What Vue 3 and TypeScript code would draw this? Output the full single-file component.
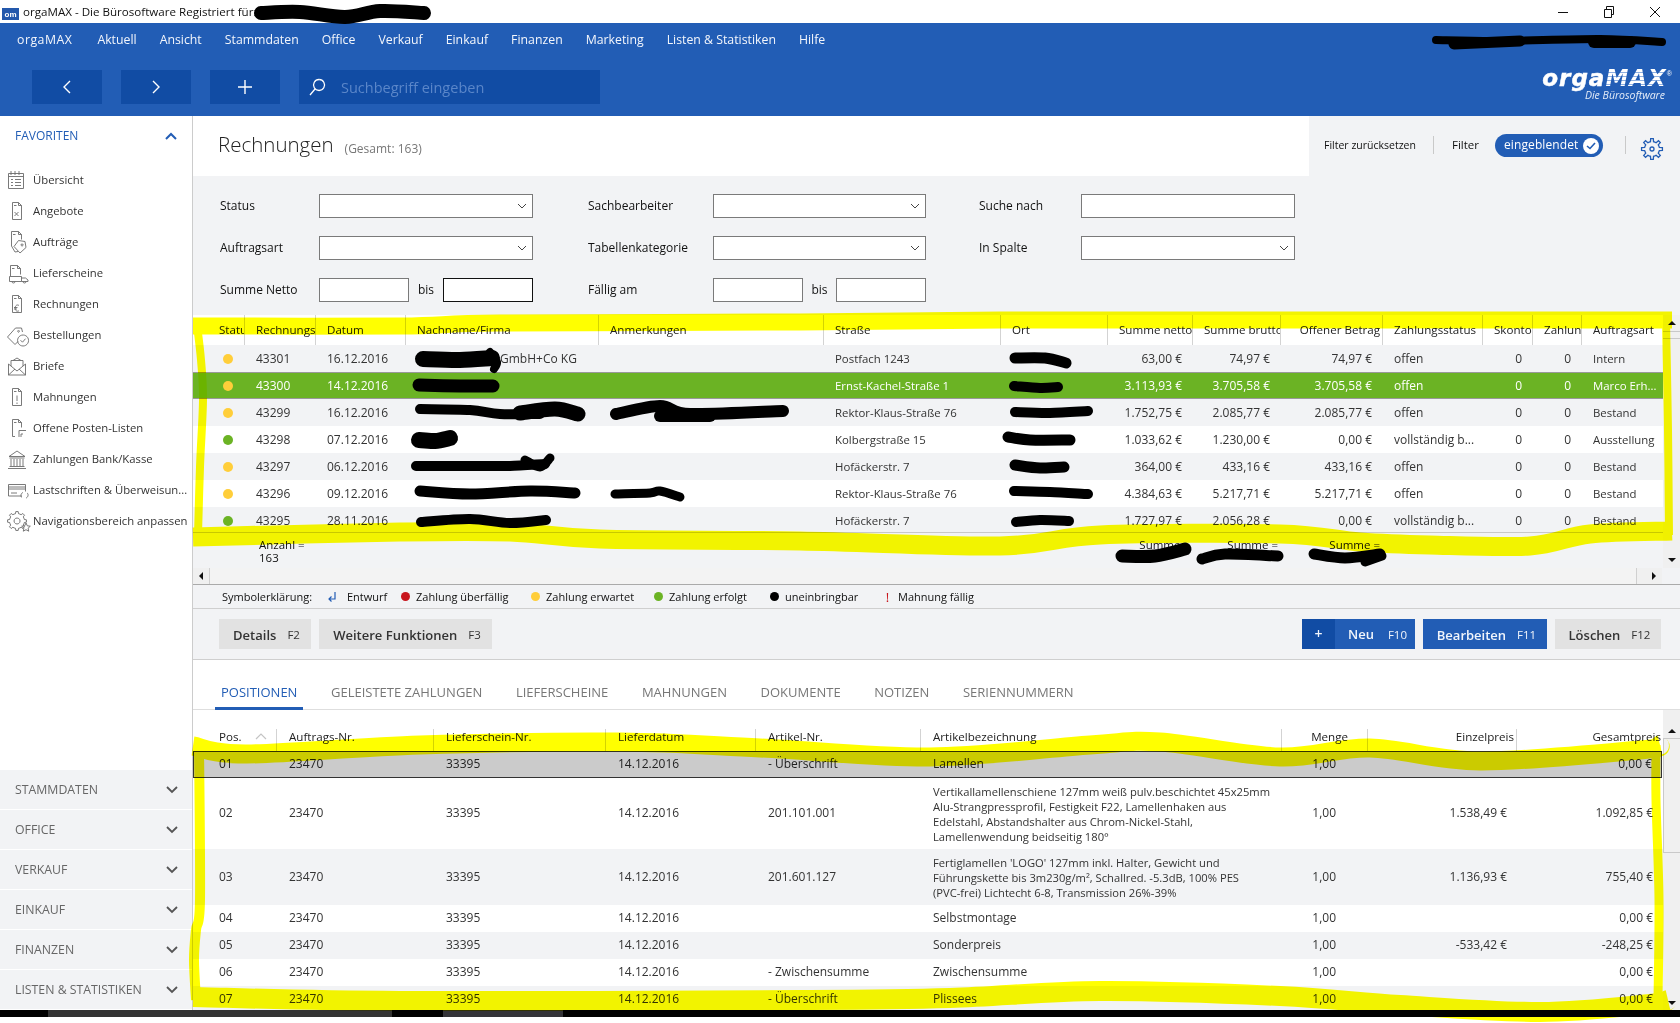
<script setup lang="ts">
type Pt = [number, number]

function smooth(p: Pt[]): string {
  let d = `M${p[0][0]} ${p[0][1]}`
  for (let i = 0; i < p.length - 1; i++) {
    const a = p[Math.max(i - 1, 0)], b = p[i], c = p[i + 1], e = p[Math.min(i + 2, p.length - 1)]
    const c1: Pt = [b[0] + (c[0] - a[0]) / 6, b[1] + (c[1] - a[1]) / 6]
    const c2: Pt = [c[0] - (e[0] - b[0]) / 6, c[1] - (e[1] - b[1]) / 6]
    d += `C${c1[0].toFixed(1)} ${c1[1].toFixed(1)} ${c2[0].toFixed(1)} ${c2[1].toFixed(1)} ${c[0]} ${c[1]}`
  }
  return d
}

function gear(cx: number, cy: number, r1: number, r2: number, n: number): string {
  let d = ''
  const st = (Math.PI * 2) / n
  for (let i = 0; i < n; i++) {
    const a = i * st
    const pts: Pt[] = [
      [r1, a - st * 0.5], [r1, a - st * 0.26], [r2, a - st * 0.16], [r2, a + st * 0.16], [r1, a + st * 0.26]
    ]
    for (const [r, t] of pts) {
      d += `${d ? 'L' : 'M'}${(cx + r * Math.cos(t)).toFixed(2)} ${(cy + r * Math.sin(t)).toFixed(2)}`
    }
  }
  return d + 'Z'
}

const doc = 'M6.5 3.5h6l3 3v14h-9z M12.5 3.5v3h3 M8 6.5h2.5 '
const menu = ['orgaMAX', 'Aktuell', 'Ansicht', 'Stammdaten', 'Office', 'Verkauf', 'Einkauf', 'Finanzen', 'Marketing', 'Listen & Statistiken', 'Hilfe']

const nav = [
  { t: 'Übersicht', d: 'M2.5 5.5h15v15h-15z M5 3v4 M9 3v4 M13 3v4 M2.5 8.5h15 M9 11.5h6 M9 14.5h6 M9 17.5h6 M5 11.5h2 M5 14.5h2 M5 17.5h2' },
  { t: 'Angebote', d: doc + 'M8.5 13l4 4 M12.5 13l-4 4' },
  { t: 'Aufträge', d: 'M5.5 16V1.5h7l3 3v5 M12.5 1.5v3h3 M7 4.5h2.5 M12.5 10.5l6.5 1 1 6-6 5.5-6-6.5z M5.5 16l3.5 6 3-.5 M16 14a1 1 0 1 0 .1 0' },
  { t: 'Lieferscheine', d: 'M4.5 15V4.5h7l3 3v6 M11.5 4.5v3h3 M6 7.5h2.5 M3.5 15.5h12v5h-12z M15.5 17h4l2.5 2v1.5h-6.5 M6 20.5a1.5 1.5 0 1 0 3 0 M17 20.5a1.5 1.5 0 1 0 3 0' },
  { t: 'Rechnungen', d: doc + 'M13 13.5c-2-1.3-3.8 0-3.8 2.6s1.8 3.9 3.8 2.6 M8 15.5h3.5 M8 17h3' },
  { t: 'Bestellungen', d: 'M1.5 14l8-9h6l1 4 M1.5 14l7.5 7.5 3-3 M12.5 7.5a.8 .8 0 1 0 .1 0 M14.5 17.2l2 2 3-3.5 M17 12a5.5 5.5 0 1 0 .1 0' },
  { t: 'Briefe', d: 'M2.5 10v11h17V10 M2.5 21l6.5-6 M19.5 21l-6.5-6 M2.5 10l8.5 7 8.5-7 M5 12V6.5h12V12 M7 6.5l4-2.5 4 2.5' },
  { t: 'Mahnungen', d: doc + 'M11 10.5v5.5 M11 17.5v1.5' },
  { t: 'Offene Posten-Listen', d: 'M9 20.5H6.5v-17h6l3 3v5 M12.5 3.5v3h3 M8 6.5h2.5 M13 21v-6.5h7 M17 18h-2v3' },
  { t: 'Zahlungen Bank/Kasse', d: 'M3 9.5L11 4l8 5.5z M5 12v7 M8 12v7 M11 12v7 M14 12v7 M17 12v7 M3.5 11h15 M3.5 19.5h15 M2 21.5h18' },
  { t: 'Lastschriften & Überweisun...', d: 'M16 18H2.5V6.5h17v7 M2.5 9h17 M2.5 11h17 M5 15h6 M16 19.5c-2 -1-1-4.5 1-5 M21 15c2 1 1 4.5-1 5' },
  { t: 'Navigationsbereich anpassen', d: gear(11, 12, 7.5, 9.5, 8) + ' M11 9a3 3 0 1 0 .1 0 M20 14l1.3 2.8 3 .4-2.2 2 .6 3-2.7-1.5-2.7 1.5.6-3-2.2-2 3-.4z' }
]
const sections = ['STAMMDATEN', 'OFFICE', 'VERKAUF', 'EINKAUF', 'FINANZEN', 'LISTEN & STATISTIKEN']

const g1Head = [
  { t: 'Status' }, { t: 'Rechnungsnr.' }, { t: 'Datum' }, { t: 'Nachname/Firma' }, { t: 'Anmerkungen' }, { t: 'Straße' }, { t: 'Ort' },
  { t: 'Summe netto', r: true }, { t: 'Summe brutto', r: true }, { t: 'Offener Betrag', r: true }, { t: 'Zahlungsstatus' },
  { t: 'Skonto', r: true }, { t: 'Zahlung', r: true }, { t: 'Auftragsart' }
]
const Y = 'y', G = 'g'
const g1Rows = [
  { dot: Y, nr: '43301', date: '16.12.2016', name: 'GmbH+Co KG', shift: true, street: 'Postfach 1243', net: '63,00 €', gross: '74,97 €', open: '74,97 €', st: 'offen', art: 'Intern', sel: false },
  { dot: Y, nr: '43300', date: '14.12.2016', name: '', shift: false, street: 'Ernst-Kachel-Straße 1', net: '3.113,93 €', gross: '3.705,58 €', open: '3.705,58 €', st: 'offen', art: 'Marco Erh...', sel: true },
  { dot: Y, nr: '43299', date: '16.12.2016', name: '', shift: false, street: 'Rektor-Klaus-Straße 76', net: '1.752,75 €', gross: '2.085,77 €', open: '2.085,77 €', st: 'offen', art: 'Bestand', sel: false },
  { dot: G, nr: '43298', date: '07.12.2016', name: '', shift: false, street: 'Kolbergstraße 15', net: '1.033,62 €', gross: '1.230,00 €', open: '0,00 €', st: 'vollständig b...', art: 'Ausstellung', sel: false },
  { dot: Y, nr: '43297', date: '06.12.2016', name: '', shift: false, street: 'Hofäckerstr. 7', net: '364,00 €', gross: '433,16 €', open: '433,16 €', st: 'offen', art: 'Bestand', sel: false },
  { dot: Y, nr: '43296', date: '09.12.2016', name: '', shift: false, street: 'Rektor-Klaus-Straße 76', net: '4.384,63 €', gross: '5.217,71 €', open: '5.217,71 €', st: 'offen', art: 'Bestand', sel: false },
  { dot: G, nr: '43295', date: '28.11.2016', name: '', shift: false, street: 'Hofäckerstr. 7', net: '1.727,97 €', gross: '2.056,28 €', open: '0,00 €', st: 'vollständig b...', art: 'Bestand', sel: false }
]

const tabs = ['POSITIONEN', 'GELEISTETE ZAHLUNGEN', 'LIEFERSCHEINE', 'MAHNUNGEN', 'DOKUMENTE', 'NOTIZEN', 'SERIENNUMMERN']
const g2Rows = [
  { pos: '01', art: '- Überschrift', desc: ['Lamellen'], ep: '', gp: '0,00 €', cls: 'picked' },
  { pos: '02', art: '201.101.001', desc: ['Vertikallamellenschiene 127mm weiß pulv.beschichtet 45x25mm', 'Alu-Strangpressprofil, Festigkeit F22, Lamellenhaken aus', 'Edelstahl, Abstandshalter aus Chrom-Nickel-Stahl,', 'Lamellenwendung beidseitig 180°'], ep: '1.538,49 €', gp: '1.092,85 €', cls: '' },
  { pos: '03', art: '201.601.127', desc: ["Fertiglamellen 'LOGO' 127mm inkl. Halter, Gewicht und", 'Führungskette bis 3m230g/m², Schallred. -5.3dB,  100% PES', '(PVC-frei) Lichtecht 6-8, Transmission 26%-39%'], ep: '1.136,93 €', gp: '755,40 €', cls: 'alt' },
  { pos: '04', art: '', desc: ['Selbstmontage'], ep: '', gp: '0,00 €', cls: '' },
  { pos: '05', art: '', desc: ['Sonderpreis'], ep: '-533,42 €', gp: '-248,25 €', cls: 'alt' },
  { pos: '06', art: '- Zwischensumme', desc: ['Zwischensumme'], ep: '', gp: '0,00 €', cls: '' },
  { pos: '07', art: '- Überschrift', desc: ['Plissees'], ep: '', gp: '0,00 €', cls: 'alt' }
]

const yellow: { d: string; w: number }[] = [
  { w: 17, d: smooth([[193, 326], [400, 326], [500, 323], [800, 322], [1000, 320], [1300, 320], [1672, 320]]) },
  { w: 8, d: smooth([[197, 325], [201, 360], [203, 400], [200, 467], [198, 535]]) },
  { w: 8, d: smooth([[1666, 320], [1668, 430], [1669, 535]]) },
  { w: 19, d: smooth([[193, 537], [400, 532], [510, 532], [600, 539], [800, 541], [1000, 546], [1100, 535], [1280, 534], [1360, 542], [1430, 545], [1530, 546], [1590, 534], [1672, 531]]) },
  { w: 19, d: smooth([[193, 746], [247, 754], [420, 745], [620, 742], [760, 748], [930, 757], [1090, 745], [1160, 742], [1280, 757], [1370, 748], [1480, 761], [1640, 750], [1660, 745]]) },
  { w: 10, d: smooth([[199, 745], [200, 900], [196, 930], [194, 960], [196, 1000]]) },
  { w: 9, d: smooth([[1656, 745], [1656, 800], [1659, 900], [1658, 1000]]) },
  { w: 20, d: smooth([[193, 997], [400, 1001], [800, 1000], [950, 998], [1100, 991], [1280, 996], [1400, 1005], [1540, 1012], [1650, 1004], [1668, 1000]]) }
]
const black: { d: string; w: number }[] = [
  { w: 11, d: smooth([[261, 13], [300, 12], [345, 17], [380, 11], [424, 13]]) },
  { w: 5, d: smooth([[1436, 40], [1500, 41], [1600, 39], [1662, 42]]) },
  { w: 8, d: smooth([[1454, 44], [1520, 41]]) },
  { w: 9, d: smooth([[1594, 42], [1630, 42]]) },
  { w: 13, d: smooth([[423, 359], [460, 360], [492, 358]]) },
  { w: 5, d: smooth([[490, 352], [497, 362], [494, 369]]) },
  { w: 10, d: smooth([[419, 385], [460, 386], [493, 386]]) },
  { w: 7, d: smooth([[420, 409], [470, 410], [500, 414], [540, 414]]) },
  { w: 12, d: smooth([[520, 413], [555, 409], [578, 414]]) },
  { w: 9, d: smooth([[616, 414], [660, 406], [690, 414], [783, 411]]) },
  { w: 9, d: smooth([[660, 416], [710, 416]]) },
  { w: 13, d: smooth([[419, 440], [435, 441], [450, 438]]) },
  { w: 7, d: smooth([[416, 466], [485, 466], [510, 466], [545, 464]]) },
  { w: 6, d: smooth([[525, 460], [540, 467], [550, 458]]) },
  { w: 8, d: smooth([[420, 491], [470, 494], [530, 491], [575, 493]]) },
  { w: 6, d: smooth([[615, 494], [650, 493], [660, 491], [680, 497]]) },
  { w: 7, d: smooth([[421, 522], [470, 519], [510, 523], [546, 520]]) },
  { w: 8, d: smooth([[1015, 358], [1045, 358], [1066, 363]]) },
  { w: 7, d: smooth([[1014, 386], [1040, 388], [1058, 387]]) },
  { w: 7, d: smooth([[1015, 412], [1050, 413], [1088, 411]]) },
  { w: 8, d: smooth([[1008, 437], [1030, 440], [1070, 440]]) },
  { w: 8, d: smooth([[1015, 465], [1040, 468], [1064, 467]]) },
  { w: 7, d: smooth([[1014, 491], [1050, 492], [1088, 494]]) },
  { w: 7, d: smooth([[1016, 522], [1040, 520], [1069, 521]]) },
  { w: 10, d: smooth([[1122, 556], [1155, 556], [1185, 549]]) },
  { w: 8, d: smooth([[1202, 559], [1225, 554], [1278, 556]]) },
  { w: 8, d: smooth([[1314, 554], [1345, 558], [1380, 554]]) },
  { w: 6, d: smooth([[1365, 562], [1382, 556]]) }
]
const topGear = gear(12, 12, 7.5, 10.5, 8)
</script>

<template>
  <div class="app">
    <div class="titlebar">
      <div class="appicon"><span>om</span></div>
      <span class="apptitle">orgaMAX - Die Bürosoftware Registriert für:</span>
      <div class="winbtns">
        <svg width="12" height="12" viewBox="0 0 12 12"><path d="M1 6.5h10" stroke="#111" fill="none" /></svg>
        <svg width="12" height="12" viewBox="0 0 12 12"><path d="M1.5 3.5h7v8h-7z M3.5 3.5V.5h7v8h-2" stroke="#111" fill="none" /></svg>
        <svg width="12" height="12" viewBox="0 0 12 12"><path d="M1 1l10 10M11 1L1 11" stroke="#111" fill="none" /></svg>
      </div>
    </div>

    <header class="header">
      <nav class="menu"><span v-for="m in menu" :key="m">{{ m }}</span></nav>
      <div class="toolbar">
        <button class="tbtn"><svg width="12" height="16" viewBox="0 0 12 16"><path d="M9 2L3 8l6 6" fill="none" stroke="#fff" stroke-width="1.4" /></svg></button>
        <button class="tbtn"><svg width="12" height="16" viewBox="0 0 12 16"><path d="M3 2l6 6-6 6" fill="none" stroke="#fff" stroke-width="1.4" /></svg></button>
        <button class="tbtn"><svg width="14" height="14" viewBox="0 0 14 14"><path d="M7 0v14M0 7h14" fill="none" stroke="#fff" stroke-width="1.4" /></svg></button>
        <div class="search">
          <svg width="20" height="20" viewBox="0 0 20 20"><path d="M12 2.5a5.5 5.5 0 1 0 .1 0 M8 12l-5 6" fill="none" stroke="#fff" stroke-width="1.3" /></svg>
          <input placeholder="Suchbegriff eingeben" />
        </div>
        <div class="logo">
          <div class="logomark"><span>orga</span><span class="max">MAX</span><sup>®</sup></div>
          <div class="logosub">Die Bürosoftware</div>
        </div>
      </div>
    </header>

    <div class="body">
      <aside class="side">
        <div class="fav">
          <span>FAVORITEN</span>
          <svg width="12" height="8" viewBox="0 0 12 8"><path d="M1 7l5-5 5 5" fill="none" stroke="#225db5" stroke-width="2" /></svg>
        </div>
        <div class="navitem" v-for="n in nav" :key="n.t">
          <svg width="26" height="24" viewBox="0 0 26 24"><path :d="n.d" fill="none" stroke="#6b6b6b" stroke-width=".9" /></svg>
          <span>{{ n.t }}</span>
        </div>
        <div class="sections">
          <div class="section" v-for="s in sections" :key="s">
            <span>{{ s }}</span>
            <svg width="12" height="8" viewBox="0 0 12 8"><path d="M1 1l5 5 5-5" fill="none" stroke="#555" stroke-width="1.8" /></svg>
          </div>
        </div>
      </aside>

      <main class="main">
        <div class="pagehead">
          <div class="titleblock"><h1>Rechnungen</h1><span class="total">(Gesamt: 163)</span></div>
          <div class="headright">
            <span class="reset">Filter zurücksetzen</span>
            <i class="vsep"></i>
            <span class="flabel">Filter</span>
            <div class="pill"><span>eingeblendet</span><b><svg width="10" height="8" viewBox="0 0 10 8"><path d="M1 4l3 2.5L9 1" fill="none" stroke="#225db5" stroke-width="1.6" /></svg></b></div>
            <i class="vsep sep2"></i>
            <svg class="topgear" width="24" height="24" viewBox="0 0 24 24"><path :d="topGear" fill="none" stroke="#225db5" stroke-width="1.3" /><circle cx="12" cy="12" r="2" fill="none" stroke="#225db5" stroke-width="1.3" /></svg>
          </div>
        </div>

        <div class="filters">
          <div class="fgroup g-a">
            <label>Status</label><div class="selectbox"><svg width="10" height="6" viewBox="0 0 10 6"><path d="M1 1l4 4 4-4" fill="none" stroke="#444" /></svg></div>
            <label>Auftragsart</label><div class="selectbox"><svg width="10" height="6" viewBox="0 0 10 6"><path d="M1 1l4 4 4-4" fill="none" stroke="#444" /></svg></div>
            <label>Summe Netto</label><div class="range"><input /><span>bis</span><input class="focus" /></div>
          </div>
          <div class="fgroup g-b">
            <label>Sachbearbeiter</label><div class="selectbox"><svg width="10" height="6" viewBox="0 0 10 6"><path d="M1 1l4 4 4-4" fill="none" stroke="#444" /></svg></div>
            <label>Tabellenkategorie</label><div class="selectbox"><svg width="10" height="6" viewBox="0 0 10 6"><path d="M1 1l4 4 4-4" fill="none" stroke="#444" /></svg></div>
            <label>Fällig am</label><div class="range"><input /><span>bis</span><input /></div>
          </div>
          <div class="fgroup g-c">
            <label>Suche nach</label><input class="wide" />
            <label>In Spalte</label><div class="selectbox"><svg width="10" height="6" viewBox="0 0 10 6"><path d="M1 1l4 4 4-4" fill="none" stroke="#444" /></svg></div>
          </div>
        </div>

        <section class="grid1">
          <div class="g1body">
            <div class="g1table">
              <div class="g1row g1head">
                <div v-for="h in g1Head" :key="h.t" class="hcell" :class="{ r: h.r }">{{ h.t }}</div>
              </div>
              <div class="g1rows">
                <div v-for="(r, i) in g1Rows" :key="r.nr" class="g1row drow" :class="{ alt: i % 2 === 0, sel: r.sel }">
                  <div class="dcell"><i class="dot" :class="r.dot"></i></div>
                  <div class="dcell">{{ r.nr }}</div>
                  <div class="dcell">{{ r.date }}</div>
                  <div class="dcell" :class="{ shift: r.shift }">{{ r.name }}</div>
                  <div class="dcell"></div>
                  <div class="dcell word">{{ r.street }}</div>
                  <div class="dcell"></div>
                  <div class="dcell r">{{ r.net }}</div>
                  <div class="dcell r">{{ r.gross }}</div>
                  <div class="dcell r">{{ r.open }}</div>
                  <div class="dcell">{{ r.st }}</div>
                  <div class="dcell r">0</div>
                  <div class="dcell r">0</div>
                  <div class="dcell word">{{ r.art }}</div>
                </div>
              </div>
              <div class="g1row g1foot">
                <div></div>
                <div class="fcell count">Anzahl =<br />163</div>
                <div></div><div></div><div></div><div></div><div></div>
                <div class="fcell sum">Summe =</div>
                <div class="fcell sum">Summe =</div>
                <div class="fcell sum">Summe =</div>
              </div>
            </div>
            <div class="vbar">
              <div class="arrow"><i class="tri up"></i></div>
              <div class="thumb small"></div>
              <div class="grow"></div>
              <div class="arrow"><i class="tri down"></i></div>
            </div>
          </div>
          <div class="hbar">
            <div class="harrow"><i class="tri left"></i></div>
            <div class="hthumb"></div>
            <div class="harrow"><i class="tri right"></i></div>
            <div class="corner"></div>
          </div>
        </section>

        <div class="legend">
          <strong>Symbolerklärung:</strong>
          <div class="li wide-gap"><svg width="10" height="12" viewBox="0 0 10 12"><path d="M8 1v7H2 M4.5 5.5L2 8l2.5 2.5" fill="none" stroke="#225db5" stroke-width="1.2" /></svg>Entwurf</div>
          <div class="li"><i class="dot red"></i>Zahlung überfällig</div>
          <div class="li"><i class="dot y"></i>Zahlung erwartet</div>
          <div class="li"><i class="dot g"></i>Zahlung erfolgt</div>
          <div class="li"><i class="dot k"></i>uneinbringbar</div>
          <div class="li"><b class="excl">!</b>Mahnung fällig</div>
        </div>

        <div class="actions">
          <button class="btn w-det">Details<kbd>F2</kbd></button>
          <button class="btn w-wei">Weitere Funktionen<kbd>F3</kbd></button>
          <div class="grow"></div>
          <button class="btn blue neu"><span class="plus">+</span><span class="neutext">Neu<kbd>F10</kbd></span></button>
          <button class="btn blue w-bea">Bearbeiten<kbd>F11</kbd></button>
          <button class="btn w-los">Löschen<kbd>F12</kbd></button>
        </div>

        <div class="tabs">
          <span v-for="(t, i) in tabs" :key="t" class="tab" :class="{ active: i === 0 }">{{ t }}</span>
        </div>

        <section class="grid2">
          <div class="g2table">
            <div class="g2row g2head">
              <div class="h2">Pos.<svg width="12" height="7" viewBox="0 0 12 7"><path d="M1 6l5-5 5 5" fill="none" stroke="#c4c4c4" stroke-width="1.2" /></svg></div>
              <div class="h2">Auftrags-Nr.</div>
              <div class="h2">Lieferschein-Nr.</div>
              <div class="h2">Lieferdatum</div>
              <div class="h2">Artikel-Nr.</div>
              <div class="h2">Artikelbezeichnung</div>
              <div class="h2 r men">Menge</div>
              <div class="h2 r">Einzelpreis</div>
              <div class="h2 r end">Gesamtpreis</div>
            </div>
            <div v-for="r in g2Rows" :key="r.pos" class="g2row row2" :class="r.cls">
              <div class="c2">{{ r.pos }}</div>
              <div class="c2">23470</div>
              <div class="c2">33395</div>
              <div class="c2">14.12.2016</div>
              <div class="c2">{{ r.art }}</div>
              <div class="c2 desc" :class="{ long: r.desc.length > 1 }"><div v-for="l in r.desc" :key="l">{{ l }}</div></div>
              <div class="c2 r qty">1,00</div>
              <div class="c2 r">{{ r.ep }}</div>
              <div class="c2 r">{{ r.gp }}</div>
            </div>
          </div>
          <div class="vbar v2">
            <div class="arrow a2"><i class="tri up"></i></div>
            <div class="thumb big"></div>
            <div class="grow"></div>
            <div class="arrow a2"><i class="tri down"></i></div>
          </div>
        </section>
      </main>
    </div>

    <div class="taskbar"><i class="s1"></i><i class="s2"></i><i class="s3"></i><i class="s4"></i></div>

    <svg class="ink marker" width="1680" height="1023" viewBox="0 0 1680 1023">
      <path v-for="(p, i) in yellow" :key="i" :d="p.d" fill="none" stroke="#ffff00" :stroke-width="p.w" stroke-linejoin="round" />
    </svg>
    <svg class="ink" width="1680" height="1023" viewBox="0 0 1680 1023">
      <path v-for="(p, i) in black" :key="i" :d="p.d" fill="none" stroke="#000" :stroke-width="p.w + 3" stroke-linecap="round" stroke-linejoin="round" />
    </svg>
  </div>
</template>

<style scoped>
.app { position: relative; width: 1680px; height: 1023px; overflow: hidden; background: #fff; color: #222; font: 12px/1.2 "Open Sans", "Noto Sans", sans-serif; display: flex; flex-direction: column; }
.app * { box-sizing: border-box; }
.grow { flex: 1; }
.titlebar { height: 23px; display: flex; align-items: center; padding-left: 2px; background: #fff; flex: none; }
.appicon { width: 17px; height: 17px; background: linear-gradient(#fff 30%, #2358ac 30%); color: #fff; font: bold 8px/10px "Liberation Sans", sans-serif; display: flex; align-items: flex-end; justify-content: center; }
.apptitle { margin-left: 4px; font-size: 11.6px; color: #111; }
.winbtns { margin-left: auto; display: flex; gap: 34px; padding-right: 19px; }
.header { height: 93px; flex: none; background: #225db5; color: #fff; display: flex; flex-direction: column; }
.menu { height: 47px; display: flex; gap: 23px; padding: 8px 0 0 17px; font-size: 12.3px; line-height: 17px; color: #f3f6fc; }
.menu span:first-child { margin-right: 2px; letter-spacing: .5px; }
.toolbar { display: flex; height: 34px; padding-left: 32px; gap: 19px; position: relative; }
.tbtn { width: 70px; height: 34px; border: 0; background: #114ca4; display: flex; align-items: center; justify-content: center; padding: 0; }
.search { width: 301px; height: 34px; background: #114ca4; display: flex; align-items: center; padding-left: 8px; gap: 14px; }
.search input { background: none; border: 0; outline: 0; font: 14.5px "Open Sans", sans-serif; color: #fff; width: 240px; padding: 0; }
.search input::placeholder { color: #5a86c9; opacity: 1; }
.logo { margin-left: auto; margin-right: 15px; margin-top: -3px; text-align: right; }
.logomark { font: italic bold 23px/23px "DejaVu Sans", sans-serif; letter-spacing: 1px; -webkit-text-stroke: .5px #fff; color: #fff; white-space: nowrap; margin-right: -7px; }
.logomark .max { background: repeating-linear-gradient(#fff 0 3px, #8fb0e0 3px 4px); -webkit-background-clip: text; background-clip: text; color: transparent; -webkit-text-stroke: 0; }
.logomark sup { font: 7px "Liberation Sans", sans-serif; vertical-align: 10px; -webkit-text-stroke: 0; letter-spacing: 0; }
.logosub { font: italic 10.5px/12px "Open Sans", sans-serif; color: #e4ecf8; margin-top: -1px; }

.body { flex: none; height: 894px; display: flex; overflow: hidden; }
.side { width: 193px; flex: none; border-right: 1px solid #ccc; display: flex; flex-direction: column; height: 894px; }
.fav { height: 48px; flex: none; padding: 12px 15px 0; color: #225db5; display: flex; justify-content: space-between; align-items: flex-start; font-size: 12px; line-height: 16px; }
.fav svg { margin-top: 4px; }
.navitem { height: 31px; flex: none; display: flex; align-items: center; padding-left: 6px; color: #333; font-size: 11.3px; white-space: nowrap; gap: 1px; }
.navitem svg { flex: none; }
.sections { margin-top: auto; }
.section { height: 40px; background: #f2f3f5; border-bottom: 1px solid #fff; display: flex; align-items: center; justify-content: space-between; padding: 1px 14px 0 15px; color: #666; font-size: 12.3px; }

.main { flex: 1; min-width: 0; display: flex; flex-direction: column; background: #f2f3f5; height: 894px; overflow: hidden; }
.pagehead { height: 60px; flex: none; display: flex; }
.titleblock { width: 1116px; background: #fff; display: flex; align-items: baseline; padding: 14px 0 0 25px; }
h1 { margin: 0; font: 300 20.5px/28px "Open Sans", sans-serif; color: #222; }
.total { color: #777; margin-left: 11px; position: relative; top: 1px; }
.headright { flex: 1; display: flex; align-items: flex-start; padding: 18px 0 0 15px; }
.reset { line-height: 22px; width: 109px; white-space: nowrap; font-size: 10.5px; color: #111; }
.vsep { width: 1px; height: 18px; background: #c9c9c9; margin-top: 2px; flex: none; }
.flabel { line-height: 22px; width: 43px; margin-left: 18px; font-size: 11.5px; color: #111; }
.pill { width: 108px; height: 23px; border-radius: 12px; background: #225db5; color: #fff; display: flex; align-items: center; justify-content: space-between; padding: 0 4px 0 9px; font-size: 12px; letter-spacing: .1px; }
.pill b { width: 16px; height: 16px; border-radius: 50%; background: #fff; display: flex; align-items: center; justify-content: center; }
.sep2 { margin-left: 22px; }
.topgear { margin: 3px 0 0 14px; }

.filters { height: 139px; flex: none; display: flex; padding: 18px 0 0 27px; gap: 55px; }
.fgroup { display: grid; grid-auto-rows: 24px; row-gap: 18px; align-items: center; align-content: start; color: #111; }
.g-a { grid-template-columns: 99px 214px; }
.g-b { grid-template-columns: 125px 213px; }
.g-c { grid-template-columns: 102px 214px; margin-left: -2px; }
.selectbox, .wide, .range input { height: 24px; border: 1px solid #7a7a7a; background: #fff; border-radius: 0; outline: 0; padding: 0; }
.wide { width: 214px; }
.selectbox { display: flex; align-items: center; justify-content: flex-end; padding-right: 5px; }
.range { display: flex; align-items: center; justify-content: space-between; }
.range input { width: 90px; }
.range input.focus { border-color: #111; }

.grid1 { flex: none; height: 270px; display: flex; flex-direction: column; border-bottom: 1px solid #aaa; }
.g1body { display: flex; height: 253px; }
.g1table { width: 1470px; flex: none; }
.g1row { display: grid; grid-template-columns: 52px 71px 90px 193px 225px 177px 107px 85px 88px 102px 100px 50px 49px 81px; }
.g1head { height: 30px; background: #fff; }
.hcell { padding: 8px 2px 0 11px; white-space: nowrap; overflow: hidden; border-right: 1px solid #d3d3d3; color: #222; font-size: 11.6px; }
.hcell:first-child { padding-left: 26px; }
.hcell:last-child { border-right: 0; }
.r { text-align: right; }
.g1rows { height: 187px; overflow: hidden; background: #fff; }
.drow { height: 27px; color: #333; }
.drow.alt { background: #f2f3f5; }
.drow.sel { background: #6bb324; color: #fff; border-top: 1px solid #999; border-bottom: 1px solid #999; }
.dcell { padding: 0 11px; line-height: 27px; white-space: nowrap; overflow: hidden; }
.dcell.word { font-size: 11.4px; }
.sel .dcell { line-height: 25px; }
.shift { padding-left: 94px; }
.dot { display: inline-block; width: 10px; height: 10px; border-radius: 50%; vertical-align: -1px; margin-left: 19px; }
.dot.y { background: #ffce3a; }
.dot.g { background: #6bb324; }
.dot.red { background: #c8161d; }
.dot.k { background: #000; }
.g1foot { height: 36px; background: #f2f3f5; border-top: 1px solid #c8c8c8; }
.fcell { padding-top: 5px; line-height: 13px; white-space: nowrap; color: #111; font-size: 11.5px; }
.count { padding-left: 14px; }
.sum { text-align: right; padding-right: 3px; }
.vbar { width: 17px; flex: none; background: #f0f0f0; display: flex; flex-direction: column; }
.arrow { height: 16px; display: flex; align-items: center; justify-content: center; }
.thumb.small { height: 8px; border-top: 1px solid #c9c9c9; border-bottom: 1px solid #c9c9c9; }
.tri { display: block; width: 0; height: 0; border: 4px solid transparent; }
.tri.up { border-bottom-color: #111; border-top-width: 0; }
.tri.down { border-top-color: #111; border-bottom-width: 0; }
.tri.left { border-right-color: #111; border-left-width: 0; }
.tri.right { border-left-color: #111; border-right-width: 0; }
.hbar { height: 16px; display: flex; background: #f0f0f0; }
.harrow { width: 16px; display: flex; align-items: center; justify-content: center; }
.hthumb { flex: 1; border-left: 1px solid #d0d0d0; border-right: 1px solid #d0d0d0; background: #f3f3f3; margin-right: 9px; }
.corner { width: 18px; background: #f2f3f5; }

.legend { height: 24px; flex: none; display: grid; grid-template-columns: 104px 75px 130px 123px 116px 113px auto; align-items: center; padding-left: 29px; font-size: 11px; color: #111; border-bottom: 1px solid #cfcfcf; white-space: nowrap; }
.legend strong { font-weight: 500; }
.li { display: flex; align-items: center; gap: 6px; }
.li.wide-gap { gap: 10px; padding-left: 1px; }
.li .dot { margin-left: 0; width: 9px; height: 9px; vertical-align: 0; }
.excl { color: #c8161d; width: 9px; text-align: center; font-weight: 400; font-size: 13px; line-height: 12px; }

.actions { height: 51px; flex: none; display: flex; padding: 10px 19px 0 26px; gap: 8px; border-bottom: 1px solid #cfcfcf; }
.btn { height: 30px; border: 0; background: #e2e2e2; color: #333; font: 600 13px "Open Sans", sans-serif; display: flex; align-items: center; justify-content: center; padding: 1px 0 0 3px; white-space: nowrap; }
kbd { font: 400 11.5px "Open Sans", sans-serif; margin-left: 11px; }
.w-det { width: 92px; }
.w-wei { width: 173px; }
.blue { background: #225db5; color: #f1f5fb; }
.neu { width: 113px; justify-content: flex-start; padding: 0; }
.neu kbd { margin-left: 14px; }
.plus { width: 33px; height: 30px; line-height: 30px; background: #114ca4; font-size: 14px; }
.neutext { padding-left: 13px; display: flex; align-items: center; }
.w-bea { width: 124px; }
.w-los { width: 106px; }

.tabs { height: 50px; flex: none; background: #fff; display: flex; gap: 21.6px; padding: 23px 0 0 22px; border-bottom: 1px solid #dedede; font-size: 13px; color: #777; }
.tab { padding: 0 6px; height: 27px; line-height: 18px; white-space: nowrap; }
.tab.active { color: #225db5; border-bottom: 3px solid #225db5; }

.grid2 { flex: 1; min-height: 0; display: flex; background: #fff; }
.g2table { width: 1470px; flex: none; overflow: hidden; }
.g2row { display: grid; grid-template-columns: 84px 157px 172px 150px 165px 361px 86px 149px 146px; }
.g2head { height: 41px; padding-top: 19px; }
.h2 { height: 22px; padding: 1px 2px 0 12px; border-right: 1px solid #d3d3d3; line-height: 14px; white-space: nowrap; color: #222; font-size: 11.6px; }
.h2:first-child { padding-left: 26px; }
.h2 svg { margin-left: 13px; vertical-align: 1px; }
.h2.men { padding-right: 19px; }
.h2.end { border-right: 0; }
.row2 { min-height: 27px; align-items: center; color: #333; }
.row2.alt { background: #f2f3f5; }
.row2.picked { background: #cbcbcb; border: 1px solid #333; min-height: 27px; height: 27px; margin-right: 1px; grid-template-columns: 83px 157px 172px 150px 165px 361px 86px 149px 145px; color: #222; }
.c2 { padding: 0 10px 0 12px; white-space: nowrap; }
.c2:first-child { padding-left: 26px; }
.picked .c2:first-child { padding-left: 25px; }
.desc.long { padding-top: 5.5px; padding-bottom: 5.5px; line-height: 15px; font-size: 11.2px; }
.qty { padding-right: 32px; }
.v2 { background: #f0f0f0; padding-top: 14px; }
.a2 { height: 14px; }
.thumb.big { height: 115px; border-top: 1px solid #c9c9c9; border-bottom: 1px solid #c9c9c9; border-left: 1px solid #c9c9c9; }

.taskbar { height: 7px; flex: none; background: #000; display: flex; }
.taskbar i { display: block; height: 7px; }
.s1 { width: 48px; }
.s2 { width: 344px; background: #333; }
.s3 { width: 51px; }
.s4 { width: 120px; background: #333338; }

.ink { position: absolute; left: 0; top: 0; pointer-events: none; }
.marker { mix-blend-mode: multiply; }
</style>
